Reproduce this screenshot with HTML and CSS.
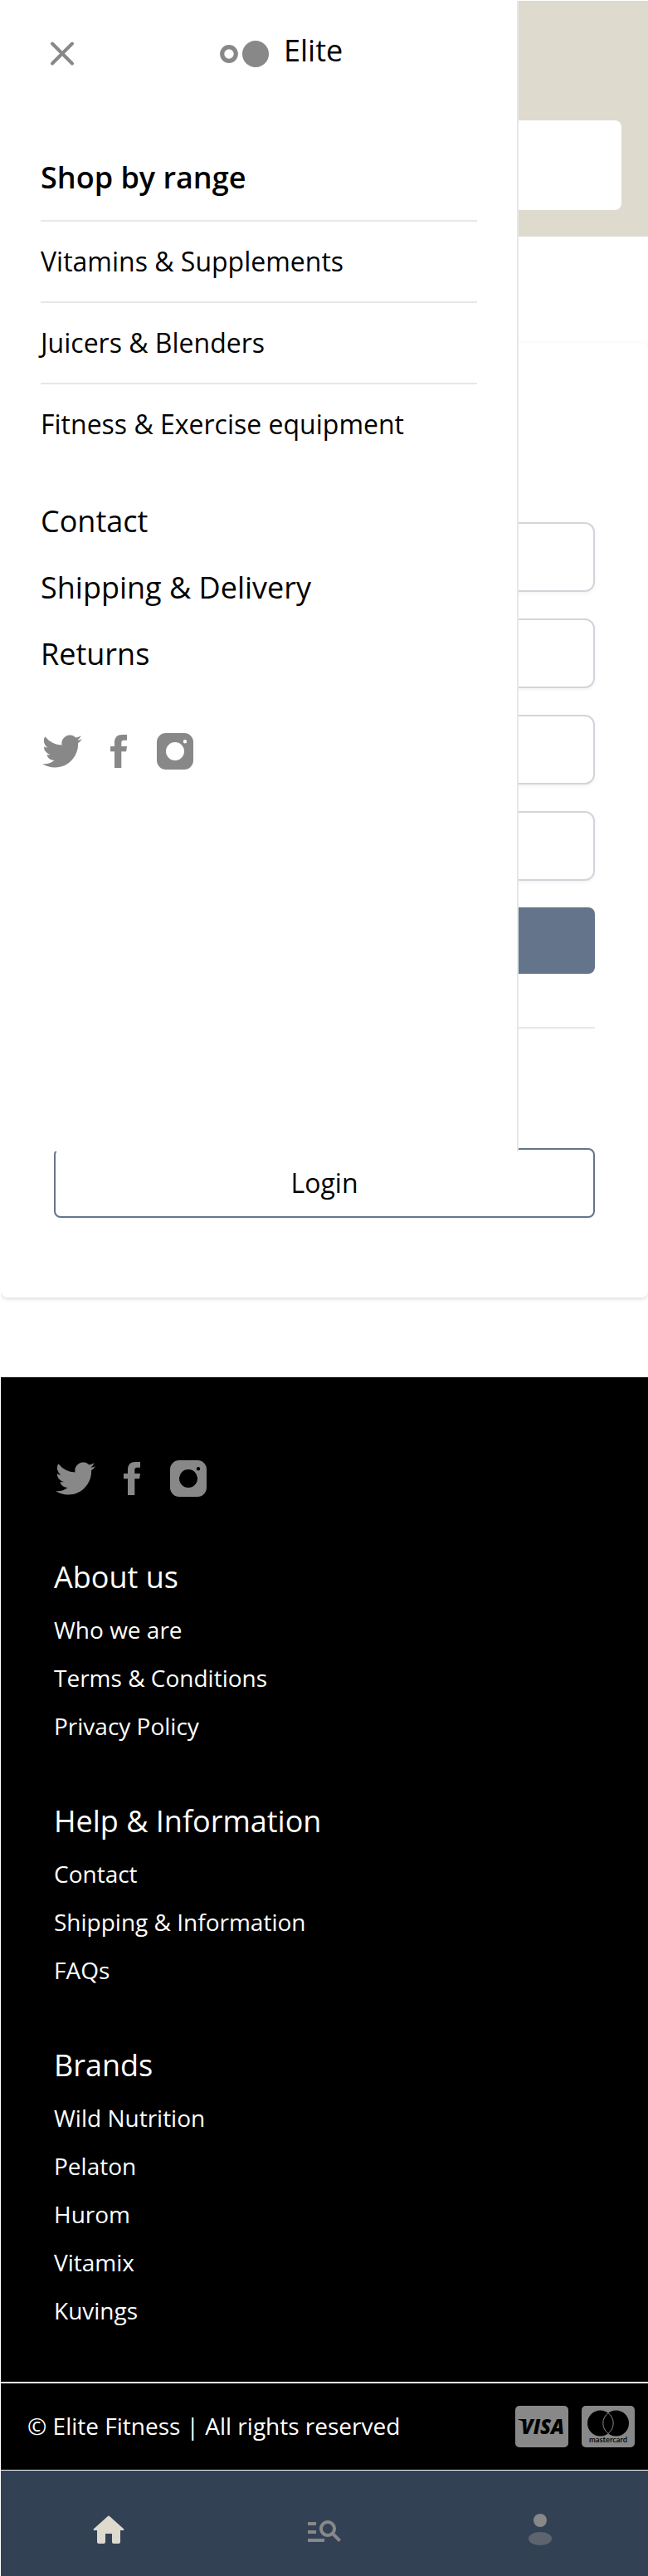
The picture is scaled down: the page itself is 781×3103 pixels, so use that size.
FILE: index.html
```html
<!DOCTYPE html>
<html lang="en">
<head>
<meta charset="utf-8">
<title>Elite Fitness</title>
<link rel="stylesheet" href="styles.css">
</head>
<body>
<svg class="defs" aria-hidden="true">
  <symbol id="twitter" viewBox="0 0 24 24"><path d="M23.95 4.57a10 10 0 0 1-2.82.77 4.96 4.96 0 0 0 2.16-2.72c-.95.56-2 .96-3.13 1.18a4.92 4.92 0 0 0-8.38 4.48A13.93 13.93 0 0 1 1.64 3.16a4.92 4.92 0 0 0 1.52 6.57 4.9 4.9 0 0 1-2.23-.61v.06a4.92 4.92 0 0 0 3.95 4.83 5 5 0 0 1-2.21.08 4.94 4.94 0 0 0 4.6 3.42A9.87 9.87 0 0 1 0 19.54a14 14 0 0 0 7.55 2.21c9.05 0 14-7.5 14-13.98 0-.21 0-.42-.02-.63a9.94 9.94 0 0 0 2.42-2.57z"/></symbol>
  <symbol id="facebook" viewBox="0 0 20 40"><path d="M20 0v6.8h-3.6c-2.6 0-3.1 1.3-3.1 3.1v4.1H20l-.9 6.2h-5.8V40H5V20.200H0V14h5V9.100C5 3.200 8.700 0 14.100 0z"/></symbol>
  <symbol id="instagram" viewBox="0 0 44 44"><path fill-rule="evenodd" d="M11 0H33A11 11 0 0 1 44 11V33A11 11 0 0 1 33 44H11A11 11 0 0 1 0 33V11A11 11 0 0 1 11 0zM22 11a11 11 0 1 0 0 22 11 11 0 0 0 0-22zM34 8a2.200 2.200 0 1 0 0 4.400 2.200 2.200 0 0 0 0-4.400z"/></symbol>
</svg>

<div class="page">
  <header class="topbar"><div class="search"></div></header>

  <main class="card">
    <form class="form">
      <div class="field"></div>
      <div class="field"></div>
      <div class="field"></div>
      <div class="field"></div>
      <div class="submit"></div>
    </form>
    <div class="divider"></div>
    <a class="login">Login</a>
  </main>

  <footer class="footer">
    <div class="social">
      <svg class="tw"><use href="#twitter"/></svg>
      <svg class="fb"><use href="#facebook"/></svg>
      <svg class="ig"><use href="#instagram"/></svg>
    </div>
    <section class="group">
      <h2>About us</h2>
      <ul><li>Who we are</li><li>Terms &amp; Conditions</li><li>Privacy Policy</li></ul>
    </section>
    <section class="group">
      <h2>Help &amp; Information</h2>
      <ul><li>Contact</li><li>Shipping &amp; Information</li><li>FAQs</li></ul>
    </section>
    <section class="group">
      <h2>Brands</h2>
      <ul><li>Wild Nutrition</li><li>Pelaton</li><li>Hurom</li><li>Vitamix</li><li>Kuvings</li></ul>
    </section>
  </footer>

  <div class="legal">
    <span class="copyright">© Elite Fitness | All rights reserved</span>
    <div class="payments">
      <svg class="pay" viewBox="0 0 64 50">
        <rect width="64" height="50" rx="5" fill="#888"/>
        <path d="M3.500 16h6l4 5-1 3C11 20 8 17.500 3.500 16.800z"/>
        <text class="visa" x="7" y="33.500" textLength="52" lengthAdjust="spacingAndGlyphs">VISA</text>
      </svg>
      <svg class="pay" viewBox="0 0 64 50">
        <rect width="64" height="50" rx="5" fill="#888"/>
        <circle cx="22.500" cy="21" r="15.500"/>
        <circle cx="41.500" cy="21" r="15.500"/>
        <path d="M32 8.600a15.500 15.500 0 0 1 0 24.800a15.500 15.500 0 0 1 0-24.800z" fill="none" stroke="#888" stroke-width="1"/>
        <text class="mc" x="9" y="44" textLength="46" lengthAdjust="spacingAndGlyphs">mastercard</text>
      </svg>
    </div>
  </div>

  <nav class="tabs">
    <svg class="tab" viewBox="0 0 24 24" fill="#dedacd"><path d="M10 19v-5h4v5c0 .55.45 1 1 1h3c.55 0 1-.45 1-1v-7h1.700c.46 0 .68-.57.33-.87L12.670 3.600a1 1 0 0 0-1.340 0l-8.360 7.530c-.34.3-.13.87.33.87H5v7c0 .55.45 1 1 1h3c.55 0 1-.45 1-1z"/></svg>
    <svg class="tab" viewBox="0 0 24 24" fill="#888"><path d="M7 9H2V7h5v2zm0 3H2v2h5v-2zm13.590 7l-3.830-3.830c-.8.52-1.740.83-2.760.83-2.760 0-5-2.240-5-5s2.240-5 5-5 5 2.240 5 5c0 1.020-.31 1.960-.83 2.750L22 17.590 20.590 19zM17 11c0-1.650-1.350-3-3-3s-3 1.350-3 3 1.350 3 3 3 3-1.350 3-3zM2 19h10v-2H2v2z"/></svg>
    <svg class="tab" viewBox="0 0 24 24" fill="#888"><circle cx="12" cy="6" r="4"/><ellipse cx="12" cy="17" rx="7" ry="4" opacity=".5"/></svg>
  </nav>

  <aside class="drawer">
    <div class="drawer-head">
      <svg class="close" viewBox="0 0 32 32"><path d="M4 3.500L28 27.500M28 3.500L4 27.500"/></svg>
      <div class="brand">
        <svg class="logo" viewBox="0 0 60 32"><circle cx="11" cy="16" r="8.300" fill="none" stroke="#888" stroke-width="5.200"/><circle cx="43" cy="16" r="16" fill="#888"/></svg>
        <span>Elite</span>
      </div>
    </div>
    <h2 class="range-title">Shop by range</h2>
    <ul class="range">
      <li>Vitamins &amp; Supplements</li>
      <li>Juicers &amp; Blenders</li>
      <li>Fitness &amp; Exercise equipment</li>
    </ul>
    <ul class="links"><li>Contact</li><li>Shipping &amp; Delivery</li><li>Returns</li></ul>
    <div class="social">
      <svg class="tw"><use href="#twitter"/></svg>
      <svg class="fb"><use href="#facebook"/></svg>
      <svg class="ig"><use href="#instagram"/></svg>
    </div>
  </aside>
</div>
</body>
</html>
```
FILE: styles.css
```css
* { box-sizing: border-box; margin: 0; padding: 0; }
body { padding: 1px 0 0 1px; background: #fff; color: #000; font-family: "Open Sans", "Noto Sans", sans-serif; font-size: 32px; }
ul { list-style: none; }
svg { display: block; flex: none; }
.defs { width: 0; height: 0; position: absolute; }
.page { position: relative; width: 780px; height: 3102px; overflow: hidden; }

.topbar { height: 284px; padding: 144px 32px 0; background: #dedacd; }
.search { height: 108px; border-radius: 8px; background: #fff; }

.card { height: 1150px; margin-top: 128px; padding: 216px 64px 96px; border-radius: 8px; background: #fff; box-shadow: 0 2px 6px rgba(0, 0, 0, .1), 0 2px 4px -2px rgba(0, 0, 0, .1); }
.form { display: flex; flex-direction: column; gap: 32px; }
.field { height: 84px; border: 2px solid #d1d5db; border-radius: 12px; box-shadow: 0 2px 4px rgba(0, 0, 0, .05); }
.submit { height: 80px; border-radius: 8px; background: #64748b; }
.divider { height: 2px; margin: 64px 0 144px; background: #e5e7eb; }
.login { display: flex; align-items: center; justify-content: center; height: 84px; border: 2px solid #64748b; border-radius: 8px; line-height: 48px; }

.social { display: flex; align-items: center; height: 48px; fill: #888; }
.tw { width: 48px; height: 48px; margin: 0 34px 0 2px; }
.fb { width: 20px; height: 40px; }
.ig { width: 44px; height: 44px; margin-left: 36px; }

.footer { margin-top: 96px; padding: 98px 64px 0; background: #000; color: #fff; }
.footer .social { margin-bottom: 67px; }
.group { padding-bottom: 58px; }
.group:last-child { padding-bottom: 57px; }
.group h2 { margin-bottom: 6px; font-size: 36px; font-weight: 400; line-height: 56px; }
.group li { font-size: 28px; line-height: 58px; }

.legal { display: flex; align-items: center; justify-content: space-between; height: 106px; padding: 0 16px 0 32px; border-top: 2px solid #e5e7eb; background: #000; color: #fff; }
.copyright { margin-bottom: 2px; font-size: 28px; line-height: 40px; }
.payments { display: flex; gap: 16px; }
.pay { width: 64px; height: 50px; }
.visa { font: italic 800 25px "Open Sans", sans-serif; }
.mc { font: 600 9.5px Lato, sans-serif; }

.tabs { display: grid; grid-template-columns: repeat(3, 1fr); justify-items: center; height: 127px; margin-top: 1px; padding-top: 48px; background: #334155; }
.tab { width: 48px; height: 48px; }

.drawer { position: absolute; top: 0; left: 0; width: 624px; height: 1386px; padding: 0 48px; border-right: 2px solid #e5e7eb; background: #fff; }
.drawer-head { display: flex; align-items: center; height: 128px; margin-bottom: 57px; }
.close { width: 32px; height: 32px; margin-left: 10px; fill: none; stroke: #888; stroke-width: 4; stroke-linecap: round; }
.brand { display: flex; align-items: center; gap: 17px; margin-left: 174px; font-size: 36px; line-height: 56px; }
.brand span { margin-bottom: 8px; }
.logo { width: 60px; height: 32px; }
.range-title { padding-bottom: 23px; font-size: 36px; font-weight: 600; line-height: 56px; }
.range li { height: 98px; border-top: 2px solid #e5e7eb; line-height: 96px; }
.range { margin-bottom: 29px; }
.links li { font-size: 36px; line-height: 80px; }
.drawer .social { margin-top: 53px; }
```
